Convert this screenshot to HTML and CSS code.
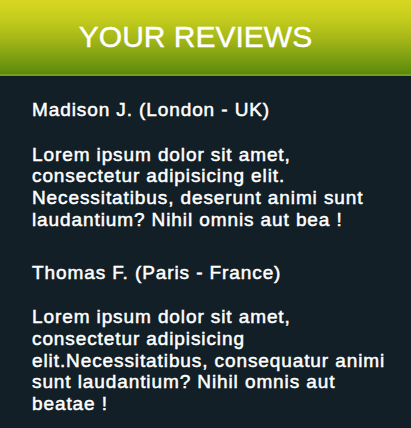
FILE: index.html
```html
<!DOCTYPE html>
<html lang="en">
<head>
<meta charset="utf-8">
<title>Your Reviews</title>
<link rel="stylesheet" href="styles.css">
</head>
<body>
<section class="reviews-widget">
  <header class="widget-header">
    <h1 class="widget-title">YOUR REVIEWS</h1>
  </header>
  <div class="review-list">
    <article class="review">
      <h2 class="review-author">Madison J. (London - UK)</h2>
      <p class="review-text">Lorem ipsum dolor sit amet, consectetur adipisicing elit. Necessitatibus, deserunt animi sunt laudantium? Nihil omnis aut bea !</p>
    </article>
    <article class="review">
      <h2 class="review-author">Thomas F. (Paris - France)</h2>
      <p class="review-text">Lorem ipsum dolor sit amet, consectetur adipisicing elit.Necessitatibus, consequatur animi sunt laudantium? Nihil omnis aut beatae !</p>
    </article>
  </div>
</section>
</body>
</html>
```

FILE: styles.css
```css
html, body {
  margin: 0;
  padding: 0;
  background: #131f26;
}

body {
  font-family: "Liberation Sans", Arial, Helvetica, sans-serif;
  color: #ffffff;
}

.reviews-widget {
  min-height: 428px;
  background: #131f26;
}

.widget-header {
  height: 76px;
  display: flex;
  align-items: center;
  justify-content: center;
  padding: 0 20px 3px 0;
  box-sizing: border-box;
  background: linear-gradient(to bottom, #d8d722 0%, #c4cc1d 25%, #a6b818 50%, #7fa012 75%, #5b8a0b 97%, #72a017 97%, #72a017 100%);
}

.widget-title {
  margin: 0;
  font-size: 30px;
  line-height: 1;
  font-weight: 400;
  color: #ffffff;
  -webkit-text-stroke: 0.4px #ffffff;
}

.review-list {
  display: flex;
  flex-direction: column;
  gap: 31px;
  padding: 23px 16px 0 32px;
}

.review {
  display: flex;
  flex-direction: column;
  gap: 23px;
}

.review-author,
.review-text {
  margin: 0;
  font-size: 19px;
  line-height: 21.7px;
  font-weight: 400;
  letter-spacing: 0.9px;
  color: #ffffff;
  -webkit-text-stroke: 0.5px #ffffff;
}
```
